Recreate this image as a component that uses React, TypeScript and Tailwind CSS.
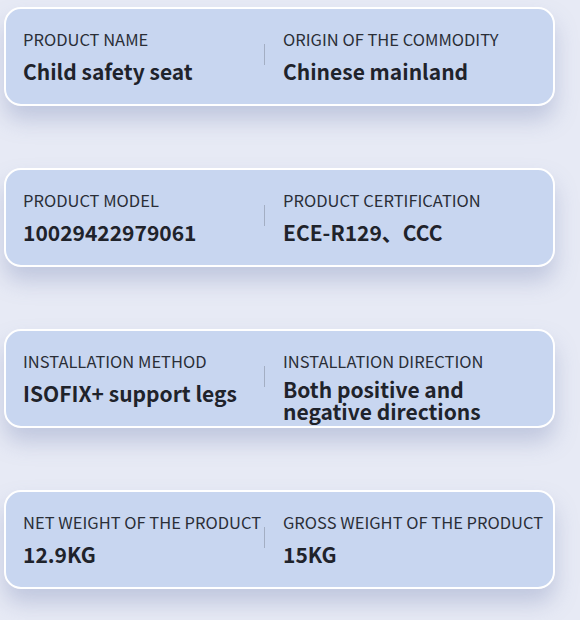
const specs = [
  [
    { label: "PRODUCT NAME", value: "Child safety seat" },
    { label: "ORIGIN OF THE COMMODITY", value: "Chinese mainland" },
  ],
  [
    { label: "PRODUCT MODEL", value: "10029422979061" },
    { label: "PRODUCT CERTIFICATION", value: "ECE-R129、CCC" },
  ],
  [
    { label: "INSTALLATION METHOD", value: "ISOFIX+ support legs" },
    { label: "INSTALLATION DIRECTION", value: "Both positive and negative directions", wrap: true },
  ],
  [
    { label: "NET WEIGHT OF THE PRODUCT", value: "12.9KG" },
    { label: "GROSS WEIGHT OF THE PRODUCT", value: "15KG" },
  ],
]

function Cell({ label, value, wrap }: { label: string; value: string; wrap?: boolean }) {
  return (
    <div className="flex flex-col">
      <span className="whitespace-nowrap text-[16.5px] leading-[20px] font-normal text-[#2a2e37]">
        {label}
      </span>
      {wrap ? (
        <span className="mt-[7px] text-[21px] leading-[22px] font-bold text-[#1f232b]">{value}</span>
      ) : (
        <span className="mt-[11px] text-[21px] leading-[23px] font-bold text-[#1f232b]">{value}</span>
      )}
    </div>
  )
}

export default function App() {
  return (
    <div
      className="w-[580px] h-[620px] overflow-hidden bg-[#e7eaf5] pt-[7px] pl-[4px] flex flex-col gap-[62px]"
      style={{ fontFamily: '"Noto Sans CJK SC", "Noto Sans", sans-serif' }}
    >
      {specs.map((row, i) => (
        <div
          key={i}
          className="w-[551px] h-[99px] shrink-0 rounded-[17px] border-2 border-white bg-[#c8d6f0] shadow-[0_14px_22px_rgba(120,135,180,0.35)] flex items-start pl-[17px] pt-[20px]"
        >
          <div className="w-[241px] shrink-0">
            <Cell {...row[0]} />
          </div>
          <div className="mt-[15px] w-px h-[21px] bg-[#a3aec3] shrink-0" />
          <div className="ml-[18px] w-[250px]">
            <Cell {...row[1]} />
          </div>
        </div>
      ))}
    </div>
  )
}
